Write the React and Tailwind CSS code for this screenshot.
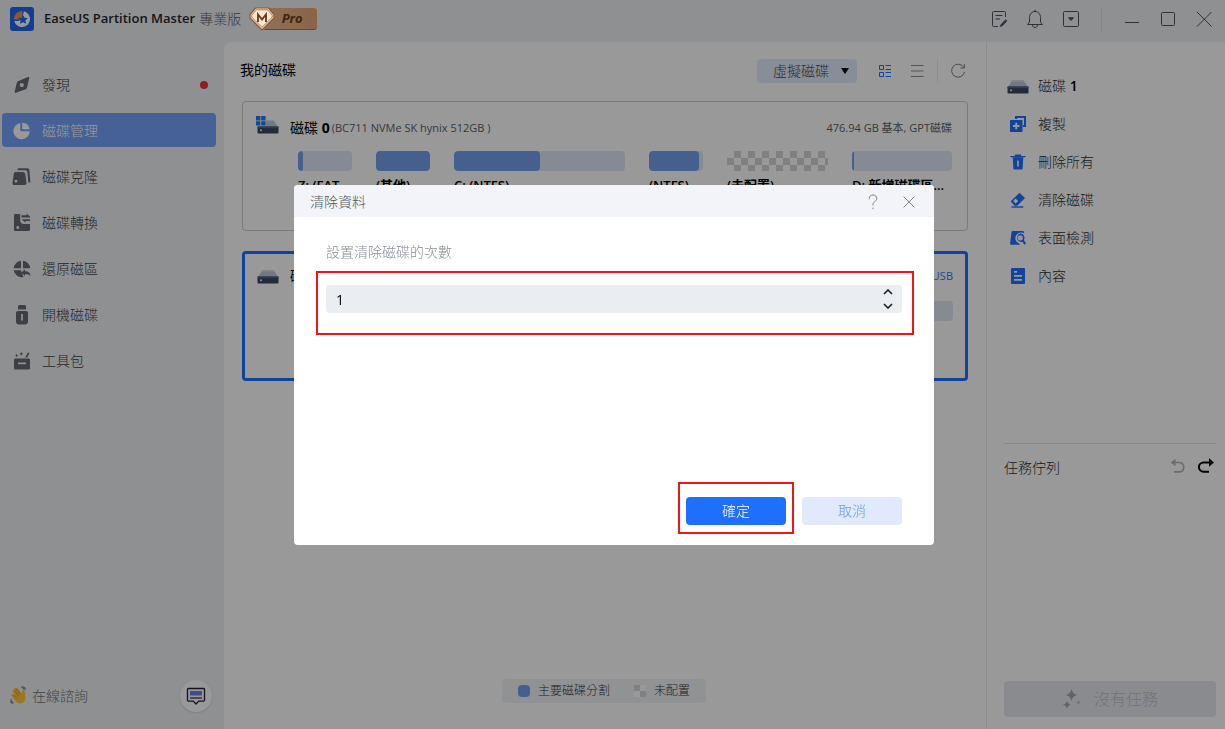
import React, { useState } from "react";

function Logo() {
  return (
    <svg className="size-6 shrink-0" viewBox="0 0 24 24" aria-hidden="true">
      <rect width="24" height="24" rx="3" fill="#1f66f0" />
      <path d="M14 4.3a8 8 0 1 1-9.7 9.6h4.5L12 11z" fill="#fff" />
      <path d="M12.4 4v6.7L8.7 12.5H4C3.8 7.600 7.600 3.800 12.400 4z" fill="#f5923e" />
      <path d="M13 7.800l1.500 3 3.300.4-2.400 2.300.6 3.300-3-1.600-3 1.600.6-3.300-2.400-2.300 3.300-.4z" fill="#1f66f0" />
    </svg>
  );
}

function ProBadge() {
  return (
    <div className="flex h-6 items-center">
      <svg className="relative z-10 h-6 w-[26px] shrink-0" viewBox="0 0 26 24" aria-hidden="true">
        <path d="M6.500 1h13l5.500 6.500v3.500L13 23 1 11V7.500z" fill="#f3d3b5" stroke="#8a5a38" strokeWidth="1.200" strokeLinejoin="round" />
        <path d="M7.300 2.800h11.400l4.500 5.400v2L13 20.300 2.800 10.200v-2z" fill="#fbe6d2" stroke="#8a5a38" strokeWidth=".7" />
        <path d="M9 15V7.500l4 5 4-5V15" fill="none" stroke="#6b3d20" strokeWidth="1.900" />
      </svg>
      <span className="-ml-3 flex h-[22px] w-[54px] items-center justify-center rounded-[3px] border-b border-[#a87850] bg-linear-to-r from-[#f0bd90] to-[#e6a877] pl-1 text-[13px] font-bold italic text-[#6b3d20]">
        Pro
      </span>
    </div>
  );
}

function Drive({ windows = false }) {
  return (
    <svg className="h-5 w-6 shrink-0" viewBox="0 0 24 20" aria-hidden="true">
      <path d="M6.500 4h11L22 11H2z" fill="#bccadb" />
      <path d="M6.500 4h11l1 1.500h-13z" fill="#d8e1ec" />
      <rect x="1.500" y="10.500" width="21" height="7" rx="1" fill="#3b4a63" />
      <rect x="1.500" y="10.500" width="21" height="1.500" fill="#53657f" />
      <circle cx="5" cy="14.200" r="1" fill="#e6f2ff" />
      {windows && (
        <g>
          <rect x="0" y="0" width="10" height="10" fill="#fff" />
          <path d="M0 0h4.400v4.400H0zM5.200 0h4.400v4.400H5.200zM0 5.200h4.400v4.400H0zM5.200 5.200h4.400v4.400H5.200z" fill="#2278f2" />
        </g>
      )}
    </svg>
  );
}

const navIcons = {
  discover: (
    <path fillRule="evenodd" d="M17.200 3.200 15 12.800c-.2.700-.6 1.100-1.200 1.400L4 17.700c-1 .3-1.600-.2-1.300-1.200L4.800 7.700c.2-.7.600-1.100 1.200-1.400l9.800-4.200c1-.4 1.600.1 1.400 1.100zM9.800 8a2.100 2.100 0 1 0 0 4.200 2.100 2.100 0 0 0 0-4.200z" />
  ),
  manage: (
    <>
      <path d="M8.300 2v7.200c0 .700.400 1 1 1h8.500A8.200 8.200 0 1 1 8.300 2z" />
      <path d="M10.200 1.800a8.200 8.200 0 0 1 7.600 6.500h-6.600c-.6 0-1-.4-1-1z" />
    </>
  ),
  clone: (
    <>
      <path fillRule="evenodd" d="M4 5h7c1.200 0 2 .7 2.200 1.800L14.500 16c.1 1.300-.6 2-1.800 2H2.500C1 18 .3 17.200.5 15.900L1.800 6.800C2 5.600 2.800 5 4 5zM4 12.800a1.400 1.400 0 1 0 0 2.800 1.400 1.400 0 0 0 0-2.800z" />
      <path d="M6 1.300h9.500c1.100 0 1.800.7 1.900 1.700l1 12.500h-2L15.300 5c-.1-1.100-.8-1.700-1.900-1.700H5.500z" />
    </>
  ),
  convert: (
    <>
      <path fillRule="evenodd" d="M3.500 1h4.700v6.500c0 2.200 1.300 3.500 3.500 3.500H18v5.500c0 1-.6 1.600-1.600 1.600H3.600C2.500 18.100 2 17.500 2 16.500V2.700C2 1.600 2.500 1 3.500 1zM5.800 13a1.500 1.500 0 1 0 0 3 1.500 1.500 0 0 0 0-3z" />
      <path d="M9.500 2.200h5V.5L18 3.400v1H9.500zM18 6.200H9.700l3.700 3.500V8H18z" />
    </>
  ),
  restore: (
    <>
      <path d="M9 1.700v7.500H1.700A8.300 8.300 0 0 1 9 1.700zM11 1.700a8.300 8.300 0 0 1 7.300 7.500h-3.500L11 9.200zM1.700 11.200H9l2.500 7A8.300 8.300 0 0 1 1.700 11.200z" />
      <path d="M13 10.300v2c3.500-.1 5.300 1.700 5.500 5-1.300-1.700-2.900-2.500-5.500-2.400v2.200l-3.700-3.400z" />
    </>
  ),
  boot: (
    <>
      <path d="M6 4.500V1.700C6 .6 6.600 0 7.700 0h4.600C13.400 0 14 .6 14 1.700v2.800z" />
      <path fillRule="evenodd" d="M6 6h8c1.300 0 2 .7 2 2v8.500c0 1.800-1.200 3-3 3H7c-1.800 0-3-1.200-3-3V8c0-1.300.7-2 2-2zm3.100 3v6.500h1.800V9z" />
    </>
  ),
  tools: (
    <>
      <path fillRule="evenodd" d="M3.500 7.500h13c1 0 1.500.5 1.500 1.500v8c0 1-.5 1.500-1.500 1.500h-13c-1 0-1.500-.5-1.500-1.500V9c0-1 .5-1.500 1.500-1.500zM6 11.500v1.800h8v-1.800z" />
      <path d="M15.800 1.500 17.500 2l-2.300 4.500h-2zM9.300.8l.6 1.400 1.400.6-1.400.6-.6 1.400-.6-1.400-1.400-.6 1.400-.6zM4.700 2.700l.5 1.300 1.300.5-1.300.6-.5 1.300-.6-1.300-1.300-.6 1.300-.5z" />
    </>
  ),
};

const navItems = [
  { id: "discover", label: "發現", dot: true },
  { id: "manage", label: "磁碟管理" },
  { id: "clone", label: "磁碟克隆" },
  { id: "convert", label: "磁碟轉換" },
  { id: "restore", label: "還原磁區" },
  { id: "boot", label: "開機磁碟" },
  { id: "tools", label: "工具包" },
];

const actionIcons = {
  copy: (
    <>
      <path d="M5 0h11v11h-3V9h1V2H7v1H5z" />
      <path fillRule="evenodd" d="M1 4h10.500c.6 0 1 .4 1 1v10c0 .6-.4 1-1 1H1c-.6 0-1-.4-1-1V5c0-.6.4-1 1-1zm4.300 2.800v2.300H3v1.900h2.300v2.300h1.900V11h2.300V9.100H7.200V6.800z" />
    </>
  ),
  trash: (
    <>
      <path d="M.5 2H5V.5h6V2h4.500v1.300H.5z" />
      <path fillRule="evenodd" d="M2.700 3.300h10.600l-.7 11.500c0 .5-.3.800-.8.800H4.200c-.5 0-.8-.3-.8-.8zM7.200 6.500v6h1.600v-6z" />
    </>
  ),
  eraser: (
    <>
      <path fillRule="evenodd" d="M9.500.8 15 5.900 7.300 13.700H4.600L1.200 10c-.4-.4-.4-.9 0-1.300zM5.600 6.500 3.200 9l2.500 2.500 2.400-2.400z" />
      <path d="M1.500 14.300h11.800v1.400H1.500z" />
    </>
  ),
  surface: (
    <>
      <path d="M3 1h10.500l.8 2.500A5.700 5.700 0 1 0 9 13.500l1.200 1.300H1.500C.5 14.800 0 14.200.1 13.300L1.500 2.300C1.600 1.500 2.100 1 3 1z" />
      <path fillRule="evenodd" d="M10.300 3.600a4.200 4.200 0 0 1 3.600 6.400l2.100 3.500-1.400 1.200-2.300-2.900a4.200 4.200 0 1 1-2-8.200zm0 1.600a2.600 2.600 0 1 0 0 5.200 2.600 2.600 0 0 0 0-5.200z" />
    </>
  ),
  props: (
    <path fillRule="evenodd" d="M2.300 0h11.400c.8 0 1.300.5 1.300 1.300v13.400c0 .8-.5 1.300-1.300 1.300H2.300C1.500 16 1 15.500 1 14.700V1.300C1 .5 1.500 0 2.300 0zM4 3v1.700h3V3zm0 4v1.700h8V7zm0 4v1.700h8V11z" />
  ),
};

const actions = [
  { id: "copy", label: "複製" },
  { id: "trash", label: "刪除所有" },
  { id: "eraser", label: "清除磁碟" },
  { id: "surface", label: "表面檢測" },
  { id: "props", label: "內容" },
];

const partitions = [
  { label: "Z: (FAT...", size: 54, used: 10 },
  { label: "(其他)", size: 54, used: 100 },
  { label: "C: (NTFS)", size: 171, used: 50 },
  { label: "(NTFS)", size: 54, used: 93 },
  { label: "(未配置)", size: 101, free: true },
  { label: "D: 新增磁碟區...", size: 100, used: 2 },
];

function LineIcon({ children, className = "size-5" }) {
  return (
    <svg className={className} viewBox="0 0 20 20" fill="none" stroke="currentColor" strokeWidth="1" aria-hidden="true">
      {children}
    </svg>
  );
}

function TitleButton({ label, children }) {
  return (
    <button type="button" aria-label={label} className="flex size-6 items-center justify-center text-[#4e525c]">
      <LineIcon>{children}</LineIcon>
    </button>
  );
}

function TitleBar() {
  return (
    <header className="flex h-[42px] shrink-0 items-center pb-1 pl-2.5 pr-[9px]">
      <Logo />
      <h1 className="ml-2.5 text-[13px] font-semibold text-[#22262e]">EaseUS Partition Master</h1>
      <span className="ml-1 mr-2 text-sm text-[#5b606a]">專業版</span>
      <ProBadge />
      <div className="ml-auto flex items-center gap-3">
        <TitleButton label="記錄">
          <path d="M16.500 8V3.500c0-.6-.4-1-1-1h-11c-.6 0-1 .4-1 1v13c0 .6.400 1 1 1H9M6.500 6.500h7M6.500 10H11" />
          <path d="M16.800 10.500 12 15.500l-1 2.200 2.300-.8 4.700-5z" fill="currentColor" strokeWidth=".5" />
        </TitleButton>
        <TitleButton label="通知">
          <path d="M2.500 15.500h15l-2-2.500V8.500c0-3.500-2.300-6-5.500-6S4.500 5 4.500 8.500V13zM10 2.500V.8M7.500 16c.2 1.800 1.200 2.500 2.500 2.500s2.300-.7 2.500-2.500" />
        </TitleButton>
        <TitleButton label="選單">
          <rect x="2.500" y="2.500" width="15" height="15" rx="1" />
          <path d="M7.500 8.800h5L10 11.500z" fill="currentColor" />
        </TitleButton>
        <span className="mx-1.5 h-6 w-px bg-[#dcdee2]" />
        <TitleButton label="最小化">
          <path d="M3 13.500h14" />
        </TitleButton>
        <TitleButton label="最大化">
          <rect x="3.500" y="3.500" width="13" height="13" rx="1" />
        </TitleButton>
        <TitleButton label="關閉">
          <path d="m3 3 14.500 14.500M17.500 3 3 17.500" />
        </TitleButton>
      </div>
    </header>
  );
}

function Sidebar() {
  return (
    <aside className="flex w-56 shrink-0 flex-col pb-[17px] pl-0.5 pr-2 pt-[25px]">
      <nav className="flex flex-col gap-3">
        {navItems.map(({ id, label, dot }) => {
          const active = id === "manage";
          return (
            <a
              key={id}
              href={"#" + id}
              className={
                "flex h-[34px] items-center gap-2.5 rounded pl-2.5 pr-2 pt-px text-sm " +
                (active ? "bg-[#74a2f8] text-white" : "text-[#3c4047]")
              }
            >
              <svg className={"size-5 " + (active ? "text-white" : "text-[#666a73]")} viewBox="0 0 20 20" fill="currentColor" aria-hidden="true">
                {navIcons[id]}
              </svg>
              {label}
              {dot && <span className="ml-auto size-2 rounded-full bg-[#f0303c]" />}
            </a>
          );
        })}
      </nav>
      <div className="mt-auto flex items-center pl-2">
        <svg className="size-5" viewBox="0 0 20 20" aria-hidden="true">
          <path d="M4.300 8.700 2.800 5.500c-.5-1.200 1-2 1.700-.9L4 3.200c-.4-1.300 1.100-1.900 1.800-.8L6 2.700c.3-1.200 1.500-1.200 2-.2l3.600 5.100.7-2.600c.4-1.500 2.200-1.100 2.200.3l.8 4.400c.8 3.900-.9 7-4.300 7.600-2.800.5-4.800-1-6.500-3.600L1.600 9.500C1 8.300 2.300 7.500 3.100 8.400z" fill="#ffc83d" />
          <path d="m4.500 4.600 4 5.600M6 2.700l4 5.700M3.500 8.800l3.200 3.600" fill="none" stroke="#cf8a22" strokeWidth=".8" />
          <path d="M11 1.200c1.800.2 3 1.200 3.500 2.900M12.500.5c2 .5 3 1.500 3.300 3M.8 12.800c.3 2 1.300 3.300 3 4M.3 15c.4 1.500 1.200 2.300 2.500 2.800" fill="none" stroke="#8d939e" strokeWidth="1.200" />
        </svg>
        <span className="ml-0.5 text-sm text-[#6c717b]">在線諮詢</span>
        <button type="button" aria-label="聊天" className="ml-auto mr-1 flex size-8 items-center justify-center rounded-full bg-white shadow">
          <svg className="size-5" viewBox="0 0 20 20" fill="none" aria-hidden="true">
            <path d="M2.300 2.500h15.400c.5 0 .8.300.8.800v11c0 .5-.3.800-.8.800h-5L10 18l-2.700-2.900h-5c-.5 0-.8-.3-.8-.8v-11c0-.5.300-.8.800-.8z" stroke="#22262e" strokeWidth="1.300" />
            <rect x="4" y="5" width="12" height="4.500" fill="#6c7df0" />
            <path d="M4 12h12" stroke="#22262e" strokeWidth="1.200" />
          </svg>
        </button>
      </div>
    </aside>
  );
}

function Partition({ label, size, used, free }) {
  return (
    <div className="min-w-0 basis-0" style={{ flexGrow: size }}>
      {free ? (
        <div className="h-5 rounded-sm bg-[repeating-conic-gradient(#d6d6d6_0_25%,#ffffff_0_50%)] bg-[length:14px_14px]" />
      ) : (
        <div className="h-5 overflow-hidden rounded-sm bg-[#dfe7f6]">
          <div className="h-full rounded-sm bg-[#74a0ec]" style={{ width: used + "%" }} />
        </div>
      )}
      <div className="mt-1 whitespace-nowrap text-[13px] font-semibold leading-5 text-black">{label}</div>
    </div>
  );
}

function Disks() {
  return (
    <main className="flex min-w-0 flex-1 flex-col rounded-tl-lg bg-white pb-[26px] pl-4 pr-[18px] pt-[17px]">
      <div className="flex h-6 items-center">
        <h2 className="mb-0.5 text-sm font-normal text-black">我的磁碟</h2>
        <label className="relative ml-auto mr-[18px] block">
          <span className="sr-only">磁碟類型</span>
          <select className="block h-6 w-[100px] appearance-none rounded bg-[#e3edfb] pl-4 text-sm leading-5 text-[#3f4754]">
            <option>虛擬磁碟</option>
          </select>
          <svg className="pointer-events-none absolute right-2 top-2 h-2 w-2" viewBox="0 0 8 8" aria-hidden="true">
            <path d="M0 1h8L4 7z" fill="#000" />
          </svg>
        </label>
        <button type="button" aria-label="卡片檢視" className="text-[#1f6fff]">
          <LineIcon>
            <path d="M4.500 4.500h4v4h-4zM4.500 11.500h4v4h-4zM10.500 4.500H16M10.500 8.500H16M10.500 11.500H16M10.500 15.500H16" />
          </LineIcon>
        </button>
        <button type="button" aria-label="清單檢視" className="ml-3 text-[#8a8d94]">
          <LineIcon>
            <path d="M4 4.500h12.500M4 10h12.500M4 15.500h12.500" />
          </LineIcon>
        </button>
        <span className="ml-2.5 h-6 w-px bg-[#ececee]" />
        <button type="button" aria-label="重新整理" className="ml-2.5 text-[#7c7f86]">
          <LineIcon>
            <path d="M15.700 6.300a6.500 6.500 0 1 0 .8 4.700M16.300 3v4h-4" />
          </LineIcon>
        </button>
      </div>

      <section className="ml-0.5 mt-[18px] h-[130px] rounded border border-[#c9cdd6] pl-[13px] pr-[15px] pt-3">
        <div className="flex h-6 items-center">
          <Drive windows />
          <h3 className="ml-2.5 mt-1 text-sm font-bold leading-5 text-black">
            <span className="font-normal">磁碟</span> 0
          </h3>
          <span className="ml-0.5 mt-1 text-[11px] font-normal text-[#5d6067]">(BC711 NVMe SK hynix 512GB )</span>
          <span className="ml-auto mt-1 text-[11px] font-normal text-[#5d6067]">476.94 GB 基本, GPT磁碟</span>
        </div>
        <div className="ml-[42px] mt-[13px] flex gap-6">
          {partitions.map((p) => (
            <Partition key={p.label} {...p} />
          ))}
        </div>
      </section>

      <section className="ml-0.5 mt-5 h-[130px] rounded border-3 border-[#1f6fff] pl-[11px] pr-3 pt-3">
        <div className="flex h-5 items-center">
          <Drive />
          <h3 className="ml-2.5 text-sm font-bold text-black">
            <span className="font-normal">磁碟</span> 1
          </h3>
          <span className="ml-auto text-[11px] font-normal text-[#3b78ea]">USB</span>
        </div>
        <div className="ml-[42px] mt-[15px] h-5 rounded-sm bg-[#dfe7f6]" />
      </section>

      <div className="mt-auto flex h-6 items-center self-center rounded bg-[#f2f4f7] px-4 text-xs text-[#31353d]">
        <span className="size-3 rounded-sm bg-[#74a0ec]" />
        <span className="ml-2">主要磁碟分割</span>
        <span className="ml-6 size-3 bg-[repeating-conic-gradient(#ffffff_0_25%,#d6d6d6_0_50%)] bg-[length:12px_12px]" />
        <span className="ml-2">未配置</span>
      </div>
    </main>
  );
}

function Operations() {
  return (
    <aside className="flex w-[239px] shrink-0 flex-col border-l border-[#ececee] bg-white pb-3 pl-[17px] pr-[9px] pt-[25px]">
      <div className="flex h-[38px] items-center gap-2 pl-0.5 text-sm text-[#2b2e34]">
        <Drive />
        <span>
          磁碟 <b className="font-semibold text-black">1</b>
        </span>
      </div>
      <ul>
        {actions.map(({ id, label }) => (
          <li key={id}>
            <button type="button" className="flex h-[38px] w-full items-center gap-3 pl-1.5 text-sm text-[#2b2e34]">
              <svg className="size-4 text-[#1f6fff]" viewBox="0 0 16 16" fill="currentColor" aria-hidden="true">
                {actionIcons[id]}
              </svg>
              {label}
            </button>
          </li>
        ))}
      </ul>
      <div className="mt-[148px] flex items-center border-t border-[#e4e5e8] pt-3.5 text-sm text-[#2b2e34]">
        <h2>任務佇列</h2>
        <button type="button" aria-label="復原" className="mb-1 ml-auto text-[#b4b6ba]">
          <svg className="size-4" viewBox="0 0 16 16" fill="none" stroke="currentColor" strokeWidth="1.700" aria-hidden="true">
            <path d="M3 4.500h6.700a4.700 4.700 0 0 1 0 9.300H4" />
            <path d="M5.500.8v7.400L.6 4.500z" fill="currentColor" stroke="none" />
          </svg>
        </button>
        <button type="button" aria-label="重做" className="mb-1 ml-3 mr-0.5 text-black">
          <svg className="size-4" viewBox="0 0 16 16" fill="none" stroke="currentColor" strokeWidth="2" aria-hidden="true">
            <path d="M12 4.500H5.500a4.600 4.600 0 0 0 0 9.200H11" />
            <path d="M11 .3v8.400l5-4.200z" fill="currentColor" stroke="none" />
          </svg>
        </button>
      </div>
      <button type="button" disabled className="mt-auto flex h-9 items-center justify-center gap-3 rounded bg-[#e6e8ee] text-base text-[#bfc2c9]">
        <svg className="size-5" viewBox="0 0 20 20" fill="#a0a4ad" aria-hidden="true">
          <path d="M9.500 0c.8 3.600 2.400 5.200 6 6-3.600.8-5.200 2.400-6 6-.8-3.600-2.400-5.200-6-6 3.600-.8 5.200-2.400 6-6zM5 11.500c.5 2.600 1.500 3.600 4 4.200-2.500.5-3.500 1.500-4 4.200-.6-2.600-1.600-3.700-4.200-4.200 2.600-.6 3.600-1.600 4.200-4.200z" />
          <path d="M16.500 11c.4 1.600 1 2.200 2.600 2.600-1.600.4-2.200 1-2.600 2.600-.4-1.600-1-2.200-2.600-2.600 1.600-.4 2.200-1 2.600-2.600z" opacity=".6" />
        </svg>
        沒有任務
      </button>
    </aside>
  );
}

function WipeDialog() {
  const [passes, setPasses] = useState(1);
  return (
    <div className="fixed inset-0 flex items-center justify-center bg-black/40 pl-[3px] pt-px">
      <div role="dialog" aria-modal="true" aria-labelledby="wipe-title" className="flex min-h-[360px] w-full max-w-[640px] flex-col overflow-hidden rounded bg-white">
        <div className="flex h-8 items-center bg-[#f2f4f9] px-4 pt-0.5 text-sm text-[#50545e]">
          <h2 id="wipe-title">清除資料</h2>
          <button type="button" aria-label="說明" className="ml-auto text-[#757988]">
            <LineIcon className="size-[18px]">
              <path d="M5.800 7V6c0-2.300 1.600-3.800 4.200-3.800s4.200 1.500 4.200 3.700c0 1.800-.9 2.700-2.300 3.700-1.300.9-1.900 1.700-1.900 3V14M10 16.200V18" />
            </LineIcon>
          </button>
          <button type="button" aria-label="關閉對話框" className="ml-[18px] text-[#757988]">
            <LineIcon className="size-[18px]">
              <path d="m4 4 12 12M16 4 4 16" />
            </LineIcon>
          </button>
        </div>
        <div className="flex flex-1 flex-col pb-[11px] pl-[22px] pr-5 pt-6">
          <label htmlFor="passes" className="pl-2.5 text-sm leading-[22px] text-[#8a8e99]">
            設置清除磁碟的次數
          </label>
          <div className="mt-2 border-2 border-[#f01414] pb-5 pl-2 pr-2.5 pt-3">
            <div className="flex h-7 items-center rounded-sm bg-[#eaeef3] pr-2">
              <input
                id="passes"
                inputMode="numeric"
                value={passes}
                onChange={(e) => setPasses(Number(e.target.value) || 1)}
                className="h-7 min-w-0 flex-1 bg-transparent pl-2.5 text-sm font-normal text-black outline-none"
              />
              <div className="flex flex-col text-[#1c1f24]">
                <button type="button" aria-label="增加" onClick={() => setPasses(passes + 1)} className="flex h-3.5 w-3 items-center justify-center">
                  <svg className="h-1.5 w-2.5" viewBox="0 0 10 6" fill="none" stroke="currentColor" strokeWidth="1.600" aria-hidden="true">
                    <path d="M1 5l4-4 4 4" />
                  </svg>
                </button>
                <button type="button" aria-label="減少" onClick={() => setPasses(Math.max(1, passes - 1))} className="flex h-3.5 w-3 items-center justify-center">
                  <svg className="h-1.5 w-2.5" viewBox="0 0 10 6" fill="none" stroke="currentColor" strokeWidth="1.600" aria-hidden="true">
                    <path d="M1 1l4 4 4-4" />
                  </svg>
                </button>
              </div>
            </div>
          </div>
          <div className="mt-auto flex items-center justify-end pr-3">
            <div className="mr-2 border-2 border-[#f01414] px-1.5 pb-[7px] pt-[13px]">
              <button type="button" className="block h-7 w-[100px] rounded bg-[#1f6fff] text-sm text-white">
                確定
              </button>
            </div>
            <button type="button" className="mt-1.5 h-7 w-[100px] rounded bg-[#e0eafc] text-sm text-[#5f98f8]">
              取消
            </button>
          </div>
        </div>
      </div>
    </div>
  );
}

export default function App() {
  return (
    <div className="flex min-h-screen flex-col bg-[#eff1f4] font-['Open_Sans','Noto_Sans_CJK_TC',sans-serif] font-light">
      <TitleBar />
      <div className="flex flex-1">
        <Sidebar />
        <Disks />
        <Operations />
      </div>
      <WipeDialog />
    </div>
  );
}
